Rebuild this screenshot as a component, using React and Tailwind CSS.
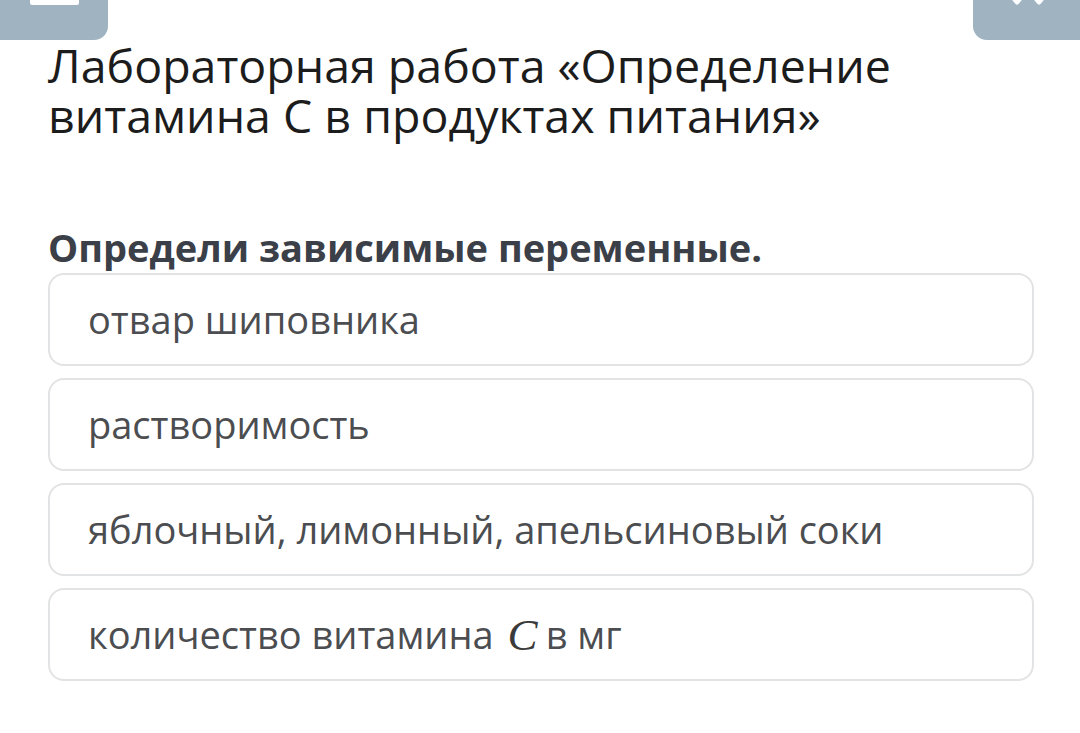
import React from 'react';

const options = [
  { id: 1, text: 'отвар шиповника' },
  { id: 2, text: 'растворимость' },
  { id: 3, text: 'яблочный, лимонный, апельсиновый соки' },
  { id: 4, text: 'количество витамина', math: 'C', after: 'в мг' },
];

const App = () => {
  return (
    <div className="w-[1080px] h-[733px] bg-white overflow-hidden" style={{ fontFamily: '"Open Sans", "Noto Sans", sans-serif' }}>
      {/* Верхние кнопки (обрезаны) */}
      <div className="flex justify-between h-[40px]">
        <div className="w-[108px] h-[40px] bg-[#9fb3c1] rounded-br-[14px] relative">
          <div className="absolute left-[30px] top-0 w-[49px] h-[5px] bg-white rounded-b-[2px]" />
        </div>
        <div className="w-[107px] h-[40px] bg-[#9fb3c1] rounded-bl-[14px] relative">
          <svg className="absolute left-[30px] top-[-14px]" width="50" height="22" viewBox="0 0 50 22">
            <path d="M6 6 L14 16 L22 6" stroke="white" strokeWidth="5" fill="none" strokeLinecap="round" strokeLinejoin="round" />
            <path d="M28 6 L36 16 L44 6" stroke="white" strokeWidth="5" fill="none" strokeLinecap="round" strokeLinejoin="round" />
          </svg>
        </div>
      </div>

      <div className="pl-[48px] pr-[46px]">
        <h1 className="text-[46.5px] leading-[50px] font-normal text-[#1c1c1c]">
          Лабораторная работа «Определение<br />витамина С в продуктах питания»
        </h1>

        <p className="mt-[85px] text-[38px] leading-[44px] font-bold text-[#3b4048]">
          Определи зависимые переменные.
        </p>

        <div className="mt-[4px] flex flex-col gap-[12px]">
          {options.map(opt => (
            <div
              key={opt.id}
              className="h-[93px] flex items-center px-[38px] border-2 border-[#e2e3e4] rounded-[16px] bg-white text-[38px] text-[#4b4d50]"
            >
              <span>{opt.text}</span>
              {opt.math && (
                <>
                  <span
                    className="ml-[14px] mr-[8px] italic text-[45px] leading-[44px] text-[#3a3a3a]"
                    style={{ fontFamily: '"Liberation Serif", "DejaVu Serif", serif' }}
                  >
                    {opt.math}
                  </span>
                  <span>{opt.after}</span>
                </>
              )}
            </div>
          ))}
        </div>
      </div>
    </div>
  );
};

export default App;
